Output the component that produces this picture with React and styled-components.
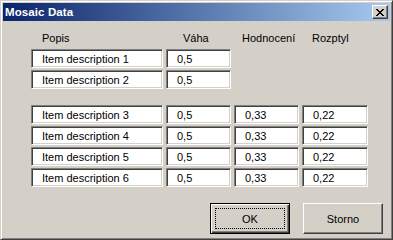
import React from "react";
import styled, { createGlobalStyle } from "styled-components";

const Global = createGlobalStyle`
  html, body { margin: 0; padding: 0; background: #D4D0C8; }
  body { font-family: "Liberation Sans", Arial, sans-serif; font-size: 11px; color: #000; }
  * { box-sizing: border-box; }
`;

const Window = styled.div`
  width: 393px;
  height: 240px;
  background: #D4D0C8;
  border: 1px solid;
  border-color: #D4D0C8 #404040 #404040 #D4D0C8;
  box-shadow: inset 1px 1px 0 #FFFFFF, inset -1px -1px 0 #808080;
  padding: 2px;
  display: flex;
  flex-direction: column;
`;

const TitleBar = styled.div`
  height: 18px;
  flex: none;
  background: linear-gradient(to right, #0A246A, #A6CAF0);
  display: flex;
  align-items: center;
  justify-content: space-between;
  padding: 0 2px 0 2px;
`;

const Title = styled.span`
  color: #FFFFFF;
  font-weight: bold;
  font-size: 11.5px;
  line-height: 18px;
  letter-spacing: 0.1px;
`;

const CloseButton = styled.div`
  width: 16px;
  height: 14px;
  background: #D4D0C8;
  border: 1px solid;
  border-color: #FFFFFF #404040 #404040 #FFFFFF;
  box-shadow: inset -1px -1px 0 #808080;
  display: flex;
  align-items: center;
  justify-content: center;
  padding-right: 1px;
`;

const Body = styled.div`
  flex: 1;
  display: flex;
  flex-direction: column;
  padding: 11px 7px 0 28px;
`;

const Grid = styled.div`
  display: grid;
  grid-template-columns: 132px 65px 65px 66px;
  grid-template-rows: ${(p) => (p.$head ? "15px" : "19px")};
  grid-auto-rows: 19px;
  column-gap: 3px;
  row-gap: 2px;
  margin-top: ${(p) => p.$gap || 0}px;
`;

const Header = styled.div`
  font-size: 11px;
  line-height: 13px;
  padding-left: ${(p) => p.$indent}px;
  white-space: nowrap;
`;

const Field = styled.div`
  grid-column: ${(p) => p.$col};
  background: #FFFFFF;
  border: 1px solid;
  border-color: #808080 #FFFFFF #FFFFFF #808080;
  box-shadow: inset 1px 1px 0 #404040, inset -1px -1px 0 #D4D0C8;
  padding-left: 10px;
  display: flex;
  align-items: center;
  white-space: nowrap;
  font-size: 11px;
`;

const ButtonRow = styled.div`
  display: flex;
  justify-content: flex-end;
  gap: 13px;
  margin-top: 16px;
`;

const Button = styled.div`
  position: relative;
  width: 80px;
  height: 31px;
  background: #D4D0C8;
  display: flex;
  align-items: center;
  justify-content: center;
  font-size: 11px;
  border: 1px solid;
  border-color: ${(p) => (p.$default ? "#000000" : "#FFFFFF #404040 #404040 #FFFFFF")};
  box-shadow: ${(p) =>
    p.$default
      ? "inset 1px 1px 0 #FFFFFF, inset -1px -1px 0 #404040, inset -2px -2px 0 #808080"
      : "inset -1px -1px 0 #808080"};
`;

const FocusRect = styled.div`
  position: absolute;
  inset: 4px;
  border: 1px dotted #000000;
  pointer-events: none;
`;

const CloseIcon = () => (
  <svg width="8" height="7" viewBox="0 0 8 7" shapeRendering="crispEdges">
    <path
      d="M0 0h2v1h-2zM6 0h2v1h-2zM1 1h2v1h-2zM5 1h2v1h-2zM2 2h4v1h-4zM3 3h2v1h-2zM2 4h4v1h-4zM1 5h2v1h-2zM5 5h2v1h-2zM0 6h2v1h-2zM6 6h2v1h-2z"
      fill="#000"
    />
  </svg>
);

const topRows = ["Item description 1", "Item description 2"];
const bottomRows = ["Item description 3", "Item description 4", "Item description 5", "Item description 6"];

export default function App() {
  return (
    <>
      <Global />
      <Window>
        <TitleBar>
          <Title>Mosaic Data</Title>
          <CloseButton>
            <CloseIcon />
          </CloseButton>
        </TitleBar>
        <Body>
          <Grid $head>
            <Header $indent={11}>Popis</Header>
            <Header $indent={17}>Váha</Header>
            <Header $indent={8}>Hodnocení</Header>
            <Header $indent={10}>Rozptyl</Header>
            {topRows.map((d) => (
              <React.Fragment key={d}>
                <Field $col={1}>{d}</Field>
                <Field $col={2}>0,5</Field>
              </React.Fragment>
            ))}
          </Grid>
          <Grid $gap={16}>
            {bottomRows.map((d) => (
              <React.Fragment key={d}>
                <Field $col={1}>{d}</Field>
                <Field $col={2}>0,5</Field>
                <Field $col={3}>0,33</Field>
                <Field $col={4}>0,22</Field>
              </React.Fragment>
            ))}
          </Grid>
          <ButtonRow>
            <Button $default>
              OK
              <FocusRect />
            </Button>
            <Button>Storno</Button>
          </ButtonRow>
        </Body>
      </Window>
    </>
  );
}
